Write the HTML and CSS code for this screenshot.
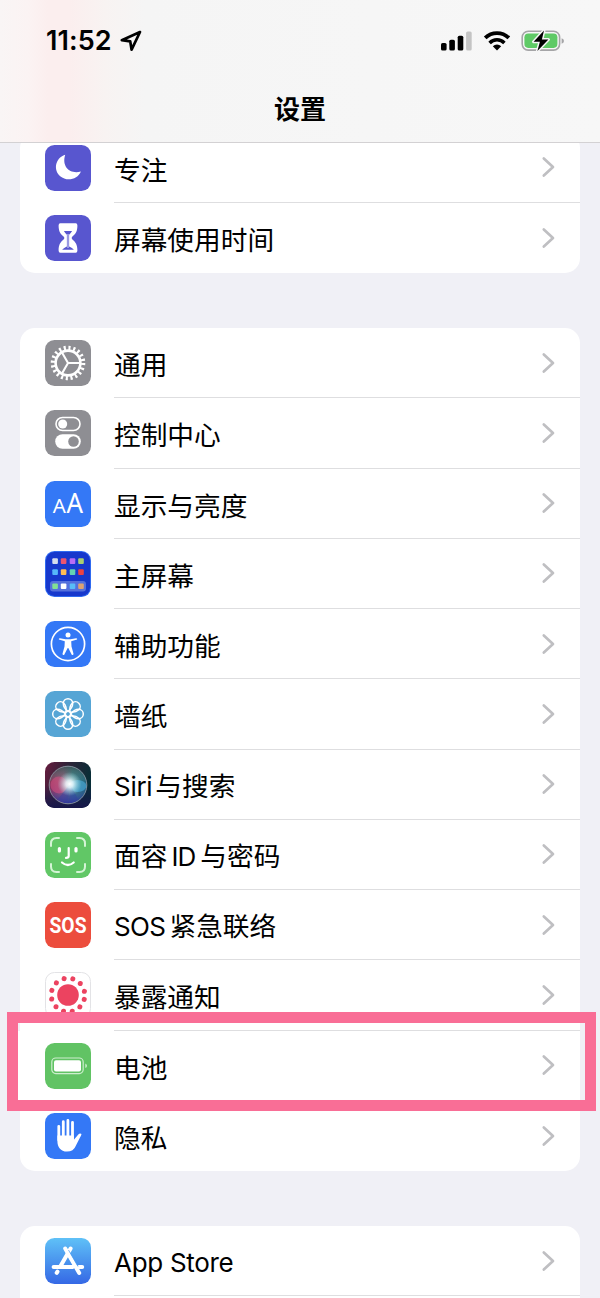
FILE: index.html
```html
<!DOCTYPE html>
<html lang="zh-CN">
<head>
<meta charset="UTF-8">
<meta name="viewport" content="width=device-width, initial-scale=1.0">
<title>设置</title>
<link rel="stylesheet" href="styles.css">
</head>

<body>

<svg class="defs" width="0" height="0">
<symbol id="chevron" viewBox="0 0 14 22">
<path d="M2.8 2.5 12 11 2.8 19.5" fill="none" stroke="#bfbfc2" stroke-width="2.7" stroke-linecap="round" stroke-linejoin="round"/>
</symbol>
</svg>

<header class="header">
<div class="status">
<div class="status-left">
<span class="time">11:52</span>
<svg class="location" width="22" height="22" viewBox="0 0 22 22"><path d="M20 2 1.8 10.2 10.2 11.3 11.6 19.7Z" fill="none" stroke="#000" stroke-width="2.7" stroke-linejoin="round"/></svg>
</div>
<div class="status-right">
<svg width="32" height="20" viewBox="0 0 32 20">
<rect x="0" y="12" width="5.6" height="7.5" rx="1.6"/>
<rect x="8.3" y="8.7" width="5.6" height="10.8" rx="1.6"/>
<rect x="16.7" y="4.7" width="5.6" height="14.8" rx="1.6"/>
<rect x="25.1" y="0.4" width="5.6" height="19.1" rx="1.6" fill="#c4c4c4"/>
</svg>
<svg class="wifi" width="28" height="20" viewBox="0 0 28 20">
<path d="M2.2 6.9A16.8 16.8 0 0 1 25.8 6.900" fill="none" stroke="#000" stroke-width="3.8"/>
<path d="M6.600 11.9A10.400 10.400 0 0 1 21.400 11.900" fill="none" stroke="#000" stroke-width="3.500"/>
<path d="M9.8 15.2A6.2 6.2 0 0 1 18.2 15.2L14 19.4Z"/>
</svg>
<svg class="power" width="44" height="24" viewBox="0 0 44 24">
<rect x="1.2" y="2.2" width="37.4" height="18.9" rx="6" fill="none" stroke="#a5a5a7" stroke-width="1.6"/>
<rect x="3.4" y="4.4" width="33" height="14.500" rx="3.8" fill="#5fca66"/>
<path d="M40.6 9.2v5.6q2.4-.8 2.4-2.8t-2.4-2.8z" fill="#a5a5a7"/>
<path d="M23 1.600 12.600 12.800h6.300L16.400 22 27.400 10.500h-6.500z" stroke="#f6f6f6" stroke-width="3" paint-order="stroke" stroke-linejoin="round"/>
</svg>
</div>
</div>
<h1>设置</h1>
</header>

<main class="list">

<section class="group group-first">
<div class="row">
<svg class="icon" viewBox="0 0 46 46"><rect width="46" height="46" rx="9.5" fill="#5856cf"/><path d="M20.200 9.800C9.500 13.500 8.500 25.500 15.200 31.300c6.800 5.700 17.600 3.100 20.700-4.800C25.500 29.500 16.300 22.200 20.200 9.800z" fill="#fff"/></svg>
<div class="cell"><span class="label">专注</span><svg class="chevron"><use href="#chevron"/></svg></div>
</div>
<div class="row">
<svg class="icon" viewBox="0 0 46 46"><rect width="46" height="46" rx="9.5" fill="#5856cf"/>
<path d="M15.300 8.200h15.400q1.700 0 1.700 2.200c0 6-1.700 8.300-5 11.100q-1.700 1.500 0 3c3.300 2.800 5 5.100 5 11.100q0 2.200-1.700 2.200H15.300q-1.700 0-1.700-2.200c0-6 1.700-8.300 5-11.100q1.700-1.500 0-3c-3.300-2.800-5-5.100-5-11.100q0-2.200 1.700-2.200z" fill="#fff"/>
<path d="M18.900 15.900h8.200q-1.200 2-3 3.900V31.500q3.300 1.300 4.800 3.200H17.100q1.800-1.900 4.800-3.200V19.800q-1.800-1.900-3-3.900z" fill="#5856cf"/><path d="M23 19v14" stroke="#fff" stroke-width=".8"/></svg>
<div class="cell"><span class="label">屏幕使用时间</span><svg class="chevron"><use href="#chevron"/></svg></div>
</div>
</section>

<section class="group">
<div class="row">
<svg class="icon" viewBox="0 0 46 46"><rect width="46" height="46" rx="9.5" fill="#8e8e93"/>
<g fill="none" stroke="#fff">
<circle cx="23" cy="23" r="12.400" stroke-width="2.600"/>
<circle cx="23" cy="23" r="15.200" stroke-width="4.200" stroke-dasharray="2.100 2.675"/>
<path d="M23 23h12M23 23l-6-10.400M23 23l-6 10.400" stroke-width="2.100"/>
</g></svg>
<div class="cell"><span class="label">通用</span><svg class="chevron"><use href="#chevron"/></svg></div>
</div>
<div class="row">
<svg class="icon" viewBox="0 0 46 46"><rect width="46" height="46" rx="9.5" fill="#8e8e93"/>
<rect x="11" y="7.500" width="24" height="13" rx="6.500" fill="none" stroke="#fff" stroke-width="1.600"/><circle cx="17.700" cy="14" r="4.500" fill="#fff"/>
<rect x="10.200" y="24.200" width="25.600" height="14.600" rx="7.300" fill="#fff"/><circle cx="28.500" cy="31.500" r="5.300" fill="#8e8e93"/></svg>
<div class="cell"><span class="label">控制中心</span><svg class="chevron"><use href="#chevron"/></svg></div>
</div>
<div class="row">
<svg class="icon" viewBox="0 0 46 46"><rect width="46" height="46" rx="9.5" fill="#3478f6"/>
<text class="aa" x="7.800" y="32.300" font-size="20.500">A</text><text class="aa" x="21.600" y="32.300" font-size="26.500" textLength="16.500" lengthAdjust="spacingAndGlyphs">A</text></svg>
<div class="cell"><span class="label">显示与亮度</span><svg class="chevron"><use href="#chevron"/></svg></div>
</div>
<div class="row">
<svg class="icon" viewBox="0 0 46 46"><rect width="46" height="46" rx="9.5" fill="#2f6af0"/><rect x="1" y="1" width="44" height="44" rx="8.500" fill="#1738cc"/>
<rect x="5" y="30" width="36" height="10.500" rx="3" fill="#5470dc"/>
<g>
<rect x="7.300" y="7.300" width="5.600" height="5.600" rx="1" fill="#d5dced"/><rect x="15.800" y="7.300" width="5.600" height="5.600" rx="1" fill="#ea5570"/><rect x="24.700" y="7.300" width="5.600" height="5.600" rx="1" fill="#b76df5"/><rect x="33.200" y="7.300" width="5.600" height="5.600" rx="1" fill="#a9cf70"/>
<rect x="7.300" y="18.300" width="5.600" height="5.600" rx="1" fill="#56b7fa"/><rect x="15.800" y="18.300" width="5.600" height="5.600" rx="1" fill="#ffbd55"/><rect x="24.700" y="18.300" width="5.600" height="5.600" rx="1" fill="#63d2b2"/><rect x="33.200" y="18.300" width="5.600" height="5.600" rx="1" fill="#ed4242"/>
<rect x="7.300" y="32.400" width="5.600" height="5.600" rx="1" fill="#82e193"/><rect x="15.800" y="32.400" width="5.600" height="5.600" rx="1" fill="#fff"/><rect x="24.700" y="32.400" width="5.600" height="5.600" rx="1" fill="#58bdf8"/><rect x="33.200" y="32.400" width="5.600" height="5.600" rx="1" fill="#dda273"/>
</g></svg>
<div class="cell"><span class="label">主屏幕</span><svg class="chevron"><use href="#chevron"/></svg></div>
</div>
<div class="row">
<svg class="icon" viewBox="0 0 46 46"><rect width="46" height="46" rx="9.5" fill="#3478f6"/>
<circle cx="23" cy="23" r="16.600" fill="none" stroke="#fff" stroke-width="1.700"/>
<circle cx="23" cy="14" r="2.500" fill="#fff"/>
<path d="M14.800 17.200 20.500 18.200h5L31.200 17.200q1.400.2.900 1.400L26.200 20.300l.3 5.200 2 7.300q0 1.700-1.600 1.200L23.300 27h-.6L19.100 34q-1.600.5-1.600-1.200l2-7.300.3-5.200-5.900-1.700q-.5-1.200.9-1.400z" fill="#fff"/></svg>
<div class="cell"><span class="label">辅助功能</span><svg class="chevron"><use href="#chevron"/></svg></div>
</div>
<div class="row">
<svg class="icon" viewBox="0 0 46 46"><rect width="46" height="46" rx="9.5" fill="#56a5d5"/>
<defs><path id="petal" d="M23 20.300C20.500 18.300 18.300 15.500 18.300 12.400a4.700 4.700 0 0 1 9.400 0C27.700 15.500 25.500 18.300 23 20.300z"/></defs>
<g fill="none" stroke="#fff" stroke-width="1.500">
<use href="#petal"/><use href="#petal" transform="rotate(45 23 23)"/><use href="#petal" transform="rotate(90 23 23)"/><use href="#petal" transform="rotate(135 23 23)"/><use href="#petal" transform="rotate(180 23 23)"/><use href="#petal" transform="rotate(225 23 23)"/><use href="#petal" transform="rotate(270 23 23)"/><use href="#petal" transform="rotate(315 23 23)"/>
<circle cx="23" cy="23" r="2.700"/>
</g></svg>
<div class="cell"><span class="label">墙纸</span><svg class="chevron"><use href="#chevron"/></svg></div>
</div>
<div class="row">
<svg class="icon" viewBox="0 0 46 46">
<defs>
<linearGradient id="siriBg" x1="0" y1="0" x2="1" y2="0.300"><stop offset="0" stop-color="#681c3e"/><stop offset=".45" stop-color="#302238"/><stop offset="1" stop-color="#082e37"/></linearGradient>
<linearGradient id="siriLow" x1="0" y1="0" x2="0" y2="1"><stop offset=".5" stop-color="#181a52" stop-opacity="0"/><stop offset="1" stop-color="#17164a"/></linearGradient>
<linearGradient id="siriOrb" x1="0" y1="0" x2="1" y2="0"><stop offset="0" stop-color="#8f2c55"/><stop offset=".38" stop-color="#a35a7c"/><stop offset=".62" stop-color="#478a92"/><stop offset="1" stop-color="#1d5f7c"/></linearGradient>
<linearGradient id="siriShade" x1="0" y1="0" x2="0" y2="1"><stop offset="0" stop-color="#355052" stop-opacity=".9"/><stop offset=".4" stop-color="#4b7a78" stop-opacity=".15"/><stop offset=".65" stop-color="#304b9b" stop-opacity=".2"/><stop offset="1" stop-color="#303098"/></linearGradient>
<radialGradient id="siriGlow"><stop offset="0" stop-color="#fff"/><stop offset=".3" stop-color="#eefcff" stop-opacity=".85"/><stop offset="1" stop-color="#9fe0e5" stop-opacity="0"/></radialGradient>
</defs>
<rect width="46" height="46" rx="9.5" fill="url(#siriBg)"/><rect width="46" height="46" rx="9.5" fill="url(#siriLow)"/>
<circle cx="23" cy="23" r="18.800" fill="url(#siriOrb)"/><circle cx="23" cy="23" r="18.800" fill="url(#siriShade)" stroke="#87939f" stroke-width=".9"/>
<circle cx="14" cy="23" r="8.500" fill="#e84e86" opacity=".45"/><ellipse cx="32.500" cy="24" rx="9" ry="6" fill="#53bdf1" opacity=".5"/>
<path d="M25 22 13 37q6 4 10 4zM25 22l-1 19q5 0 9-4z" fill="#3040a2" opacity=".45"/>
<circle cx="24.500" cy="22" r="12" fill="url(#siriGlow)"/></svg>
<div class="cell"><span class="label"><span class="latin siri">Siri</span>与搜索</span><svg class="chevron"><use href="#chevron"/></svg></div>
</div>
<div class="row">
<svg class="icon" viewBox="0 0 46 46"><rect width="46" height="46" rx="9.5" fill="#61c766"/>
<g fill="none" stroke-linecap="round" stroke-linejoin="round">
<path d="M6 14V11.500Q6 6 11.500 6H14M32 6h2.500Q40 6 40 11.500V14M40 32v2.500Q40 40 34.500 40H32M14 40h-2.500Q6 40 6 34.500V32" stroke="#d4f4d5" stroke-width="2"/>
<path d="M14.400 16.500v2.500M31 16.500v2.500" stroke="#fff" stroke-width="3.200"/>
<path d="M23.700 16v8q0 1.900-2.700 1.900M17 30.500q5.900 5 11.700 0" stroke="#fff" stroke-width="2.200"/>
</g></svg>
<div class="cell"><span class="label">面容<span class="latin face-id">ID</span>与密码</span><svg class="chevron"><use href="#chevron"/></svg></div>
</div>
<div class="row">
<svg class="icon" viewBox="0 0 46 46"><rect width="46" height="46" rx="9.5" fill="#ec4d3d"/><text class="sos" x="4.500" y="30.600" textLength="37" lengthAdjust="spacingAndGlyphs">SOS</text></svg>
<div class="cell"><span class="label"><span class="latin sos-label">SOS</span>紧急联络</span><svg class="chevron"><use href="#chevron"/></svg></div>
</div>
<div class="row">
<svg class="icon" viewBox="0 0 46 46"><rect x=".5" y=".5" width="45" height="45" rx="9" fill="#fff" stroke="#e3e3e6"/>
<circle cx="23" cy="23" r="10.800" fill="#ec4360"/>
<circle cx="23" cy="23" r="16.800" fill="none" stroke="#ec4360" stroke-width="5" stroke-linecap="round" stroke-dasharray="0 8.796" transform="rotate(15 23 23)"/></svg>
<div class="cell"><span class="label">暴露通知</span><svg class="chevron"><use href="#chevron"/></svg></div>
</div>
<div class="row row-battery">
<svg class="icon" viewBox="0 0 46 46"><rect width="46" height="46" rx="9.5" fill="#61c364"/>
<rect x="6.800" y="15" width="31.400" height="15.600" rx="4" fill="none" stroke="#cdeece" stroke-width="1.200"/>
<rect x="9" y="17.200" width="27" height="11.200" rx="2" fill="#fff"/><path d="M40.300 20.500v4.600q1.700-.7 1.700-2.300t-1.700-2.300z" fill="#cdeece"/></svg>
<div class="cell"><span class="label">电池</span><svg class="chevron"><use href="#chevron"/></svg></div>
<div class="highlight"></div>
</div>
<div class="row">
<svg class="icon" viewBox="0 0 46 46"><rect width="46" height="46" rx="9.5" fill="#3478f6"/>
<path d="M13.800 13.300V27M18.300 8.700V26M22.900 7.400V26M27.500 9.300V26" stroke="#fff" stroke-width="2.800" stroke-linecap="round"/>
<path d="M12.400 22.500h16.500v4.200l4.400-5.300q1.600-1.500 3.200-.5-.3 1.700-1.500 3.500l-4.300 8.500Q28.500 38.600 22 38.600c-6.500 0-9.600-4.600-9.600-10.600z" fill="#fff"/></svg>
<div class="cell"><span class="label">隐私</span><svg class="chevron"><use href="#chevron"/></svg></div>
</div>
</section>

<section class="group">
<div class="row">
<svg class="icon" viewBox="0 0 46 46">
<defs><linearGradient id="store" x1="0" y1="0" x2="0" y2="1"><stop offset="0" stop-color="#5fc1f7"/><stop offset="1" stop-color="#3568e5"/></linearGradient></defs>
<rect width="46" height="46" rx="9.5" fill="url(#store)"/>
<g stroke="#fff" stroke-width="4" stroke-linecap="round">
<path d="M8.600 29h19M34 29h3.200"/><path d="M25.600 10.500 15.300 28.500M12.500 33.600l-.8 1.300"/><path d="M20.200 10.500 34.200 35"/></g>
<path d="M23.500 12l9.500 16.500" stroke="#459af0" stroke-width=".7"/></svg>
<div class="cell"><span class="label"><span class="latin">App Store</span></span><svg class="chevron"><use href="#chevron"/></svg></div>
</div>
</section>

</main>

</body>
</html>
```

FILE: styles.css
```css
*{box-sizing:border-box;}

body{
margin:0;
background:#f0f0f6;
color:#000;
font-family:"Noto Sans CJK SC",sans-serif;
}

.defs{
display:block;
}

.header{
position:relative;
z-index:2;
height:143px;
border-bottom:1px solid #d3d1d3;
background:linear-gradient(90deg,#f9f5f5 0,#fbf3f3 28px,#fbeeee 48px,#fbeeee 70px,#f8f3f2 105px,#f5f5f5 145px,#f7f7f7 100%);
}

.status{
display:flex;
justify-content:space-between;
height:82px;
padding:0 35px 0 46px;
}

.status-left,
.status-right{
display:flex;
align-items:center;
}

.time{
margin-top:-2px;
font-family:Inter,sans-serif;
font-size:27px;
font-weight:600;
letter-spacing:.1px;
}

.location{
margin-left:8px;
}

.wifi{
margin-left:10px;
}

.power{
margin-left:10px;
}

.header h1{
margin:0;
font-size:26px;
font-weight:700;
line-height:51px;
text-align:center;
}

.list{
height:1155px;
padding:0 20px;
overflow:hidden;
}

.group{
margin-bottom:55px;
background:#fff;
border-radius:15px;
}

.group:last-child{
margin-bottom:0;
padding-bottom:2px;
border-radius:15px 15px 0 0;
}

.group-first{
margin-top:-10.5px;
}

.row{
display:flex;
align-items:center;
height:70.25px;
padding-left:25px;
}

.icon{
flex:none;
width:46px;
height:46px;
margin-right:23px;
}

.cell{
flex:1;
display:flex;
align-items:center;
justify-content:space-between;
height:100%;
padding-right:25px;
border-bottom:1px solid #dedee0;
font-size:26.7px;
line-height:40px;
}

.row:last-child .cell{
border-bottom:none;
}

.group:last-child .cell{
border-bottom:1px solid #dedee0;
}

.label{
padding-top:3px;
}

.chevron{
width:14px;
height:22px;
}

.latin{
font-family:Inter,sans-serif;
font-size:26px;
letter-spacing:-.3px;
}

.siri{
margin-right:3px;
}

.face-id{
margin:0 5px 0 4px;
letter-spacing:-.9px;
}

.sos-label{
margin-right:4px;
letter-spacing:-.6px;
}

.aa{
font-family:"Noto Sans",sans-serif;
font-weight:400;
fill:#fff;
}

.sos{
font-family:Roboto,sans-serif;
font-size:22px;
font-weight:700;
fill:#fff;
}

.row-battery{
position:relative;
margin-left:-2px;
padding-left:27px;
background:#fff;
}

/* frame drawn over the neighbouring rows */
.highlight{
position:absolute;
top:-18.5px;
left:-11px;
width:589px;
height:99px;
border:11px solid #f96e96;
}
```
